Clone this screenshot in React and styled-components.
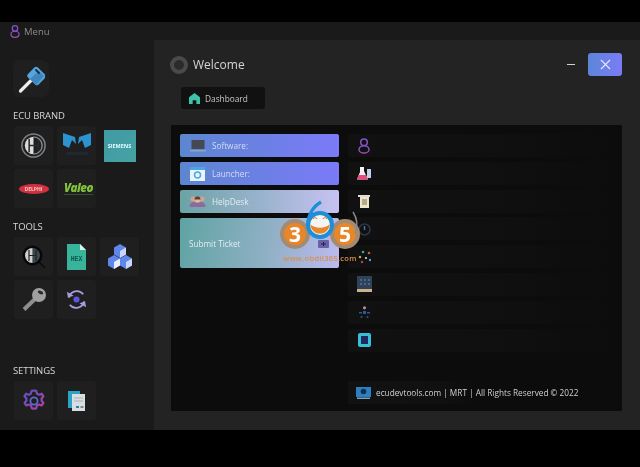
import React from "react";
import styled, { createGlobalStyle } from "styled-components";
import { X } from "lucide-react";

const GlobalStyle = createGlobalStyle`
  html, body { margin: 0; padding: 0; background: #000; }
  body { font-family: "Open Sans", "Liberation Sans", sans-serif; }
`;

const Page = styled.div`
  position: relative;
  width: 640px;
  height: 467px;
  overflow: hidden;
  background: #000;
  padding-top: 22px;
  box-sizing: border-box;
  filter: blur(0.35px);
`;

const AppWindow = styled.div`
  height: 408px;
  display: flex;
  flex-direction: column;
  background: #1a1a1b;
`;

const TitleBar = styled.div`
  height: 18px;
  display: flex;
  align-items: center;
  gap: 1px;
  padding-left: 7px;
  color: #8b8b8f;
  font-size: 9.5px;
`;

const Body = styled.div`
  flex: 1;
  display: flex;
  min-height: 0;
`;

const Sidebar = styled.aside`
  width: 154px;
  box-sizing: border-box;
  padding: 20px 0 0 14px;
  display: flex;
  flex-direction: column;
`;

const SectionLabel = styled.div`
  color: #d6d6d6;
  font-size: 9.5px;
  line-height: 12px;
  margin: ${(p) => p.$top}px 0 4px -1px;
  letter-spacing: -0.1px;
`;

const TileGrid = styled.div`
  display: grid;
  grid-template-columns: repeat(3, 39px);
  grid-auto-rows: 39px;
  gap: 4px;
`;

const Tile = styled.div`
  display: flex;
  align-items: center;
  justify-content: center;
  background: #1f1f20;
  border-radius: 3px;
  ${(p) => p.$plain && "background: transparent;"}
`;

const KeyTile = styled(Tile)`
  width: 36px;
  height: 37px;
  margin-left: -1px;
  border-radius: 7px;
`;

const Siemens = styled.div`
  width: 32px;
  height: 32px;
  display: flex;
  align-items: center;
  justify-content: center;
  background: linear-gradient(135deg, #3f9aa3, #46a3a4);
  color: #dff;
  font-size: 5.5px;
  font-weight: 700;
`;

const DelphiBadge = styled.div`
  width: 30px;
  height: 10px;
  border-radius: 50%;
  display: flex;
  align-items: center;
  justify-content: center;
  background: #d2303e;
  color: #f5c8cc;
  font-size: 5px;
  font-weight: 700;
`;

const ValeoMark = styled.div`
  color: #82c23c;
  font-size: 11.5px;
  font-weight: 800;
  font-style: italic;
  letter-spacing: -0.5px;
  margin-left: 4px;
  border-bottom: 1px solid #35502a;
  line-height: 12px;
`;

const Main = styled.main`
  flex: 1;
  background: #232324;
  display: flex;
  flex-direction: column;
  padding-left: 17px;
`;

const Header = styled.header`
  height: 47px;
  display: flex;
  align-items: center;
  gap: 5px;
  padding-right: 18px;
`;

const Ring = styled.div`
  width: 10px;
  height: 10px;
  margin: 2px 0 0 -1px;
  border: 4px solid #4a4a4c;
  border-radius: 50%;
  background: #2b2b2c;
`;

const Title = styled.h1`
  margin: 2px 0 0;
  flex: 1;
  color: #d4d4d4;
  font-size: 12px;
  font-weight: 400;
`;

const Minimize = styled.div`
  width: 8px;
  height: 1.5px;
  background: #d0d0d0;
  margin: 2px 8px 0 0;
`;

const CloseButton = styled.div`
  width: 34px;
  height: 23px;
  margin-top: 2px;
  border-radius: 3px;
  display: flex;
  align-items: center;
  justify-content: center;
  color: #e6e6ff;
  background: linear-gradient(90deg, #5c86d8, #7a7cf6);
`;

const TabRow = styled.div`
  padding-left: 10px;
  height: 38px;
`;

const Tab = styled.div`
  width: 84px;
  height: 22px;
  box-sizing: border-box;
  padding-left: 8px;
  display: flex;
  align-items: center;
  gap: 5px;
  background: #111112;
  border-radius: 3px;
  color: #c9c9c9;
  font-size: 8.3px;
`;

const Panel = styled.section`
  width: 451px;
  height: 286px;
  box-sizing: border-box;
  padding: 9px 9px;
  background: #0c0c0d;
  display: grid;
  grid-template-columns: 159px 1fr;
  column-gap: 9px;
`;

const ActionColumn = styled.div`
  display: flex;
  flex-direction: column;
  gap: 5px;
`;

const ActionButton = styled.div`
  height: ${(p) => (p.$tall ? 50 : 23)}px;
  flex: none;
  box-sizing: border-box;
  display: flex;
  align-items: center;
  gap: 6px;
  padding-left: 9px;
  border-radius: 2px;
  color: ${(p) => (p.$tone === "blue" ? "#d6dcf5" : "#e4ecf0")};
  font-size: 8.2px;
  background: ${(p) =>
    p.$tone === "blue"
      ? "linear-gradient(90deg, #5c86cf, #7b7af8)"
      : p.$tone === "soft"
      ? "linear-gradient(90deg, #6ba3a6, #c6c2f2)"
      : "linear-gradient(100deg, #5fa3a3, #8fb0c4 55%, #bdbaf0)"};
`;

const IconSlot = styled.div`
  width: 17px;
  height: 14px;
  flex: none;
  display: flex;
  align-items: center;
  justify-content: center;
`;

const RightColumn = styled.div`
  display: flex;
  flex-direction: column;
`;

const ListRow = styled.div`
  height: 23px;
  margin-bottom: 4.8px;
  padding-left: 8px;
  display: flex;
  align-items: center;
  background: linear-gradient(90deg, #111112, #0f0f10 65%, #0c0c0d);
  border-radius: 2px;
`;

const RowIcon = styled.div`
  width: 16px;
  height: 17px;
  display: flex;
  align-items: center;
  justify-content: center;
`;

const Footer = styled.div`
  margin-top: 25px;
  height: 23px;
  display: flex;
  align-items: center;
  gap: 5px;
  padding-left: 8px;
  color: #cfcfcf;
  font-size: 8.25px;
  white-space: nowrap;
  background: linear-gradient(90deg, #121213, #101011 100px, #0c0c0d 125px);
`;

const Watermark = styled.div`
  position: absolute;
  left: 279px;
  top: 199px;
  width: 90px;
  height: 66px;
`;

const WatermarkCoin = styled.div`
  position: absolute;
  left: ${(p) => p.$left}px;
  top: 20px;
  width: 22px;
  height: 22px;
  border-radius: 50%;
  background: #e8862a;
  border: 4px solid rgba(140, 140, 140, 0.75);
  color: #fff;
  font-size: 21px;
  line-height: 22px;
  font-weight: 700;
  text-align: center;
`;

const WatermarkUrl = styled.div`
  position: absolute;
  left: 4px;
  top: 54px;
  color: #d9904a;
  font-size: 7.5px;
  line-height: 10px;
  font-weight: 600;
  letter-spacing: 0.3px;
  white-space: nowrap;
`;

const WatermarkArt = styled.svg`
  position: absolute;
  left: 0;
  top: 0;
`;

const PersonIcon = ({ w = 12, h = 16 }) => (
  <svg width={w} height={h} viewBox="0 0 12 16" fill="none">
    <defs>
      <linearGradient id="personGrad" x1="0" y1="0" x2="0" y2="1">
        <stop offset="0" stopColor="#6f58d0" />
        <stop offset="1" stopColor="#a84bb0" />
      </linearGradient>
    </defs>
    <circle cx="6" cy="4.2" r="3.300" stroke="url(#personGrad)" strokeWidth="1.500" />
    <ellipse cx="6" cy="11.400" rx="5" ry="3.700" stroke="url(#personGrad)" strokeWidth="1.500" />
  </svg>
);

const BlueKey = () => (
  <svg width="28" height="30" viewBox="0 0 28 30" fill="none">
    <path d="M14 16.500L3.500 27" stroke="#ececec" strokeWidth="3.200" strokeLinecap="round" />
    <rect x="12" y="5" width="15" height="14" rx="2.500" transform="rotate(45 19.500 12)" fill="#55a5dc" />
    <path d="M13 15l9-8 5 5-8 9z" fill="#3f86bd" />
    <path d="M19 6l3 3" stroke="#14283a" strokeWidth="1.800" strokeLinecap="round" />
  </svg>
);

const BoschIcon = () => (
  <svg width="27" height="27" viewBox="0 0 28 28" fill="none">
    <circle cx="14" cy="14" r="12" stroke="#7d8186" strokeWidth="1.600" />
    <path d="M14 5a9 9 0 0 0 0 18z" fill="#dcdcdc" />
    <path d="M9.500 7v14M9.500 14H19M19 7v14" stroke="#2a2a2b" strokeWidth="1.600" />
    <path d="M14 5a9 9 0 0 1 0 18" stroke="#8b8f94" strokeWidth="1.400" />
  </svg>
);

const MaseratiIcon = () => (
  <svg width="30" height="27" viewBox="0 0 30 27">
    <path d="M1 1l12 4 1 7-4-4-3 8-6-3z" fill="#2c93d1" />
    <path d="M29 1l-12 4-1 7 4-4 3 8 6-3z" fill="#2c93d1" />
    <path d="M4 20h22v3H4z" fill="#1f2733" />
  </svg>
);

const HexLens = () => (
  <svg width="24" height="24" viewBox="0 0 24 24" fill="none">
    <circle cx="10.500" cy="10.500" r="10" fill="#070707" />
    <path d="M10.500 3a7.500 7.500 0 0 1 0 15z" fill="#3f474b" />
    <path d="M10.500 3a7.500 7.500 0 0 0 0 15z" fill="#d0d2d4" />
    <path d="M7 5v11M7 10.500h7M14 5v11" stroke="#1f2224" strokeWidth="1.200" />
    <path d="M17 17l6 6" stroke="#0a0a0a" strokeWidth="1.600" />
  </svg>
);

const HexFile = () => (
  <svg width="19" height="26" viewBox="0 0 19 26">
    <path d="M0 0h13l6 6v20H0z" fill="#38b49a" />
    <path d="M13 0l6 6h-6z" fill="#d8f2ec" />
    <text x="9.500" y="17" textAnchor="middle" fontSize="6.500" fontWeight="700" fontFamily="Liberation Mono, monospace" fill="#0e5a52">HEX</text>
  </svg>
);

const Cubes = () => (
  <svg width="26" height="25" viewBox="0 0 26 25">
    <path d="M13 0l6 3.500v7L13 14l-6-3.500v-7z" fill="#5f86ea" />
    <path d="M13 7l6-3.500v7L13 14z" fill="#c8d6fa" />
    <path d="M7 11l6 3.500v7L7 25l-6-3.500v-7z" fill="#5f86ea" />
    <path d="M7 18l6-3.500v7L7 25z" fill="#e8eefc" />
    <path d="M19 11l6 3.500v7L19 25l-6-3.500v-7z" fill="#5f86ea" />
    <path d="M19 18l6-3.500v7L19 25z" fill="#c8d6fa" />
  </svg>
);

const GreyKey = () => (
  <svg width="26" height="26" viewBox="0 0 26 26" fill="none">
    <path d="M3 22.500L14 12" stroke="#8e8e8e" strokeWidth="4" />
    <circle cx="18" cy="8" r="7" fill="#a0a0a0" />
    <ellipse cx="19.500" cy="5.500" rx="2.800" ry="1.600" transform="rotate(20 19.500 5.500)" fill="#2a2a2a" />
  </svg>
);

const SyncIcon = () => (
  <svg width="21" height="21" viewBox="0 0 22 22" fill="none">
    <path d="M3 9a8.500 8.500 0 0 1 15-3.500" stroke="#a79de0" strokeWidth="2" />
    <path d="M19 13a8.500 8.500 0 0 1-15 3.500" stroke="#a79de0" strokeWidth="2" />
    <path d="M1 3l1 6 6-2zM21 19l-1-6-6 2z" fill="#a79de0" />
    <circle cx="11" cy="11" r="3.200" fill="#5f55e0" />
  </svg>
);

const GearIcon = () => (
  <svg width="24" height="24" viewBox="0 0 24 24" fill="none">
    <defs>
      <linearGradient id="gearGrad" x1="0" y1="0" x2="1" y2="1">
        <stop offset="0" stopColor="#5a50c0" />
        <stop offset="1" stopColor="#b540a8" />
      </linearGradient>
    </defs>
    <path
      d="M12 1.500l2.200.4.800 2.800 2 1 2.700-1 1.700 2.600-1.800 2.200v2.200l1.800 2.200-1.700 2.600-2.700-1-2 1-.8 2.800-2.200.4-2.200-.4-.8-2.800-2-1-2.700 1-1.700-2.600 1.800-2.200v-2.200L2.400 7.300l1.700-2.600 2.700 1 2-1 .8-2.800z"
      stroke="url(#gearGrad)"
      strokeWidth="2.200"
      strokeLinejoin="round"
    />
    <circle cx="12" cy="12" r="3.600" stroke="#5a6ad0" strokeWidth="1.800" />
  </svg>
);

const DocsIcon = () => (
  <svg width="17" height="20" viewBox="0 0 17 20">
    <path d="M0 0h12v17H0z" fill="#2aa3c7" />
    <path d="M4 3h13v17H4z" fill="#d8dee1" />
    <path d="M6 7h9M6 10h9" stroke="#a8b2b8" />
    <path d="M8 15h3v2H8z" fill="#2a7fb5" />
    <path d="M12.500 15h3v2h-3z" fill="#7c8a94" />
  </svg>
);

const HomeIcon = () => (
  <svg width="11" height="11" viewBox="0 0 12 12">
    <path d="M6 0l6 4.500V12H8V8H4v4H0V4.500z" fill="#3fc0a8" />
  </svg>
);

const LaptopIcon = () => (
  <svg width="16" height="12" viewBox="0 0 16 12">
    <path d="M1.500 0h13v9h-13z" fill="#46494f" />
    <path d="M0 10h16v1.500H0z" fill="#8ea2c4" />
  </svg>
);

const LauncherIcon = () => (
  <svg width="15" height="14" viewBox="0 0 15 14" fill="none">
    <path d="M0 0h15v14H0z" fill="#eaf4fb" />
    <path d="M0 0h15v3H0z" fill="#48a7e4" />
    <circle cx="7.500" cy="8" r="3" stroke="#48a7e4" strokeWidth="1.500" />
  </svg>
);

const PeopleIcon = () => (
  <svg width="17" height="13" viewBox="0 0 16 13">
    <circle cx="3.500" cy="4" r="2.500" fill="#d8a28a" />
    <circle cx="12.500" cy="4" r="2.500" fill="#d8a28a" />
    <circle cx="8" cy="5" r="2.800" fill="#e6b49a" />
    <path d="M8 1.500a3 3 0 0 1 3 3H5a3 3 0 0 1 3-3z" fill="#5a4038" />
    <path d="M0 12c0-4 3-5 4-5s3 1 4 1 3-1 4-1 4 1 4 5z" fill="#8c6a9c" />
  </svg>
);

const FlaskIcon = () => (
  <svg width="15" height="15" viewBox="0 0 15 15">
    <path d="M3 1h4v4l4 8.500H0L3 6z" fill="#f2f2f2" />
    <path d="M1.500 9h7.500l2 4.500H0z" fill="#e8487c" />
    <path d="M10 3h4v9h-4z" fill="#c2d0ec" />
  </svg>
);

const NoteIcon = () => (
  <svg width="12" height="13" viewBox="0 0 12 13">
    <path d="M0 0h12v2H0z" fill="#ddd" />
    <path d="M2 2h9v11H2z" fill="#efe6c8" />
    <path d="M4 5h5M4 7h5M4 9h5" stroke="#77705a" />
  </svg>
);

const ClockIcon = () => (
  <svg width="13" height="14" viewBox="0 0 13 14" fill="none">
    <circle cx="6.500" cy="7.500" r="5.500" stroke="#2d3846" strokeWidth="1.500" />
    <path d="M6.500 4v4" stroke="#4474a8" strokeWidth="1.500" />
  </svg>
);

const DotsIcon = () => (
  <svg width="14" height="14" viewBox="0 0 14 14">
    <circle cx="6" cy="2" r="1.300" fill="#36b08e" />
    <circle cx="12" cy="3" r="1.300" fill="#c0604c" />
    <circle cx="3" cy="7" r="1.200" fill="#d8b040" />
    <circle cx="9" cy="8" r="1.100" fill="#d8d8d8" />
    <circle cx="13" cy="10" r="1.200" fill="#4aa8d8" />
    <circle cx="5" cy="12" r="1.200" fill="#b04a4a" />
  </svg>
);

const ChipIcon = () => (
  <svg width="15" height="16" viewBox="0 0 15 16">
    <path d="M0 0h15v13H0z" fill="#2f4258" />
    <path d="M0 13h15v3H0z" fill="#c8b48a" />
    <path d="M3 3h2v2H3zM7 3h2v2H7zM11 3h2v2h-2zM3 7h2v2H3zM7 7h2v2H7zM11 7h2v2h-2z" fill="#4a6484" />
  </svg>
);

const NodesIcon = () => (
  <svg width="13" height="13" viewBox="0 0 13 13">
    <circle cx="6.500" cy="1.800" r="1.600" fill="#b08a9a" />
    <path d="M1 6h3v1.500H1zM9 6h3v1.500H9zM5 5h3v3H5z" fill="#2a5a94" />
    <circle cx="3.500" cy="11" r="1" fill="#2a5a94" />
    <circle cx="9.500" cy="11" r="1" fill="#2a5a94" />
  </svg>
);

const SquareIcon = () => (
  <svg width="13" height="14" viewBox="0 0 13 14">
    <rect width="13" height="14" rx="2" fill="#38c0da" />
    <rect x="3" y="3" width="7" height="8" fill="#1d2c5c" />
  </svg>
);

const MonitorIcon = () => (
  <svg width="15" height="12" viewBox="0 0 15 12">
    <path d="M0 0h15v10H0z" fill="#2d7fc4" />
    <circle cx="7.500" cy="4.500" r="2.800" fill="#12304f" />
    <path d="M1 10.500h13V12H1z" fill="#7fa4c4" />
  </svg>
);

const brandTiles = [
  <BoschIcon key="bosch" />,
  <MaseratiIcon key="maserati" />,
  <Siemens key="siemens">SIEMENS</Siemens>,
  <DelphiBadge key="delphi">DELPHI</DelphiBadge>,
  <ValeoMark key="valeo">Valeo</ValeoMark>,
];

const toolTiles = [
  <HexLens key="lens" />,
  <HexFile key="hex" />,
  <Cubes key="cubes" />,
  <GreyKey key="key" />,
  <SyncIcon key="sync" />,
];

const settingTiles = [<GearIcon key="gear" />, <DocsIcon key="docs" />];

const listIcons = [
  <PersonIcon key="person" />,
  <FlaskIcon key="flask" />,
  <NoteIcon key="note" />,
  <ClockIcon key="clock" />,
  <DotsIcon key="dots" />,
  <ChipIcon key="chip" />,
  <NodesIcon key="nodes" />,
  <SquareIcon key="square" />,
];

export default function App() {
  return (
    <Page>
      <GlobalStyle />
      <AppWindow>
        <TitleBar>
          <RowIcon>
            <PersonIcon w={10} h={13} />
          </RowIcon>
          Menu
        </TitleBar>
        <Body>
          <Sidebar>
            <KeyTile>
              <BlueKey />
            </KeyTile>
            <SectionLabel $top={13}>ECU BRAND</SectionLabel>
            <TileGrid>
              {brandTiles.map((icon, i) => (
                <Tile key={i} $plain={i === 2}>
                  {icon}
                </Tile>
              ))}
            </TileGrid>
            <SectionLabel $top={13}>TOOLS</SectionLabel>
            <TileGrid>
              {toolTiles.map((icon, i) => (
                <Tile key={i}>{icon}</Tile>
              ))}
            </TileGrid>
            <SectionLabel $top={46}>SETTINGS</SectionLabel>
            <TileGrid>
              {settingTiles.map((icon, i) => (
                <Tile key={i}>{icon}</Tile>
              ))}
            </TileGrid>
          </Sidebar>
          <Main>
            <Header>
              <Ring />
              <Title>Welcome</Title>
              <Minimize />
              <CloseButton>
                <X size={17} strokeWidth={1.6} />
              </CloseButton>
            </Header>
            <TabRow>
              <Tab>
                <HomeIcon />
                Dashboard
              </Tab>
            </TabRow>
            <Panel>
              <ActionColumn>
                <ActionButton $tone="blue">
                  <IconSlot><LaptopIcon /></IconSlot>
                  Software:
                </ActionButton>
                <ActionButton $tone="blue">
                  <IconSlot><LauncherIcon /></IconSlot>
                  Launcher:
                </ActionButton>
                <ActionButton $tone="soft">
                  <IconSlot><PeopleIcon /></IconSlot>
                  HelpDesk
                </ActionButton>
                <ActionButton $tall>Submit Ticket</ActionButton>
              </ActionColumn>
              <RightColumn>
                {listIcons.map((icon, i) => (
                  <ListRow key={i}>
                    <RowIcon>{icon}</RowIcon>
                  </ListRow>
                ))}
                <Footer>
                  <MonitorIcon />
                  ecudevtools.com | MRT | All Rights Reserved © 2022
                </Footer>
              </RightColumn>
            </Panel>
          </Main>
        </Body>
      </AppWindow>
      <Watermark>
        <WatermarkCoin $left={1}>3</WatermarkCoin>
        <WatermarkCoin $left={51}>5</WatermarkCoin>
        <WatermarkArt width="90" height="60" viewBox="0 0 90 60" fill="none">
          <rect x="39" y="41" width="11" height="8" rx="1" fill="#6a60a8" />
          <path d="M42 45h5M44.500 43v4" stroke="#23233f" strokeWidth="1" />
          <circle cx="41" cy="26" r="12" fill="#f4f4f4" stroke="#1d8fd8" strokeWidth="4" />
          <path d="M29 26C29 15 35 7 42 3" stroke="#1d8fd8" strokeWidth="3.500" />
          <path d="M31 25c2 13 18 13 20 0-5 5-15 5-20 0z" fill="#e8862a" />
          <path d="M34 20q2-3 4 0M44 20q2-3 4 0" stroke="#e8862a" strokeWidth="1.200" />
          <path d="M74 13c4 6 5 14 2 22" stroke="#8a8a8a" strokeWidth="1.500" />
        </WatermarkArt>
        <WatermarkUrl>www.obdii365.com</WatermarkUrl>
      </Watermark>
    </Page>
  );
}
